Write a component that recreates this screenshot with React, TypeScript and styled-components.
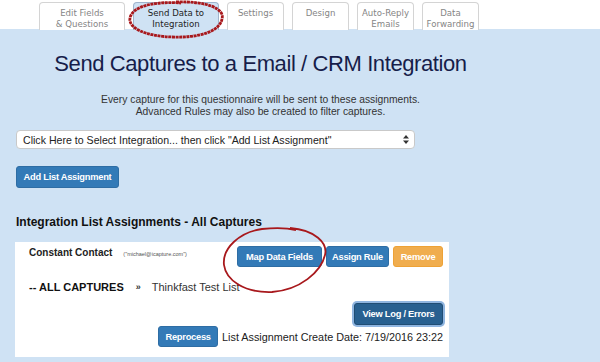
import styled, { createGlobalStyle } from "styled-components";

const GlobalStyle = createGlobalStyle`
  html, body {
    margin: 0;
    padding: 0;
    background: #cfe2f4;
    font-family: "Liberation Sans", Arial, sans-serif;
  }
  body {
    width: 600px;
    height: 362px;
    overflow: hidden;
  }
`;

const Page = styled.div`
  position: relative;
  width: 600px;
  height: 362px;
`;

const TabBar = styled.div`
  display: flex;
  gap: 8px;
  height: 29px;
  padding: 2px 0 0 39px;
  box-sizing: border-box;
  background: #fff;
`;

const Tab = styled.div<{ $w: number; $active?: boolean }>`
  width: ${(p) => p.$w}px;
  height: 28px;
  box-sizing: border-box;
  border: 1px solid ${(p) => (p.$active ? "#9fb4cc" : "#d4d4d4")};
  border-bottom: none;
  border-radius: 4px 4px 0 0;
  background: ${(p) => (p.$active ? "#cfe2f4" : "#fff")};
  color: ${(p) => (p.$active ? "#222" : "#858585")};
  font-family: "DejaVu Sans", Verdana, sans-serif;
  font-size: 8.6px;
  line-height: 11px;
  text-align: center;
  padding-top: 5px;
  white-space: nowrap;
`;

const Main = styled.div`
  padding: 21px 0 0 15px;
`;

const Intro = styled.div`
  width: 491px;
  text-align: center;
`;

const Heading = styled.h1`
  margin: 0;
  font-size: 22px;
  line-height: 28px;
  letter-spacing: -0.4px;
  font-weight: 400;
  color: #161d4a;
`;

const Lead = styled.p`
  margin: 16px 0 0;
  font-size: 10.3px;
  line-height: 12px;
  color: #333;
`;

const SelectBox = styled.div`
  margin: 12px 0 0 1px;
  width: 399px;
  height: 19px;
  box-sizing: border-box;
  display: flex;
  align-items: center;
  justify-content: space-between;
  padding: 0 5px 0 6px;
  background: #fff;
  border: 1px solid #c9c9c9;
  border-radius: 4px;
  font-size: 10.6px;
  color: #222;
`;

const Button = styled.button<{ $tone?: "primary" | "active" | "warning"; $w?: number }>`
  font-family: "Liberation Sans", Arial, sans-serif;
  font-size: 9.3px;
  font-weight: 700;
  letter-spacing: -0.25px;
  color: #fff;
  height: 21px;
  ${(p) => (p.$w ? `width: ${p.$w}px;` : "")}
  padding: 0 4px;
  border-radius: 3px;
  cursor: pointer;
  white-space: nowrap;
  background: ${(p) =>
    p.$tone === "warning" ? "#f0ad4e" : p.$tone === "active" ? "#286090" : "#337ab7"};
  border: 1px solid
    ${(p) => (p.$tone === "warning" ? "#eea236" : p.$tone === "active" ? "#204d74" : "#2e6da4")};
  box-shadow: ${(p) => (p.$tone === "active" ? "0 0 0 2px #8fb5e0" : "none")};
`;

const AddButton = styled(Button)`
  margin: 17px 0 0 1px;
  height: 22px;
`;

const LogButton = styled(Button)`
  height: 22px;
`;

const SectionTitle = styled.h3`
  margin: 27px 0 0 1px;
  font-size: 12px;
  line-height: 14px;
  font-weight: 700;
  color: #111;
`;

const Card = styled.div`
  margin-top: 13px;
  width: 434px;
  height: 115px;
  box-sizing: border-box;
  background: #fff;
  padding: 4px 6px 0 14px;
`;

const TopRow = styled.div`
  display: flex;
  align-items: flex-start;
`;

const Provider = styled.div`
  margin-top: 1px;
  font-size: 10px;
  font-weight: 700;
  color: #222;
  white-space: nowrap;
`;

const Account = styled.span`
  margin-left: 11px;
  font-size: 5.5px;
  font-weight: 400;
  color: #555;
`;

const Actions = styled.div`
  margin-left: auto;
  display: flex;
  gap: 4px;
`;

const ListLine = styled.div`
  margin-top: 14px;
  font-size: 11px;
  color: #333;
  display: flex;
  align-items: center;
`;

const ListTag = styled.span`
  font-weight: 700;
  color: #111;
`;

const Chevron = styled.span`
  margin: 0 11px 0 12px;
  font-size: 9px;
  font-weight: 700;
`;

const RightRow = styled.div<{ $gap: number }>`
  margin-top: ${(p) => p.$gap}px;
  display: flex;
  justify-content: flex-end;
  align-items: center;
  gap: 4px;
`;

const DateText = styled.span`
  font-size: 10.8px;
  color: #222;
  white-space: nowrap;
`;

const Scribble = styled.svg`
  position: absolute;
  pointer-events: none;
  overflow: visible;
`;

function SortArrows() {
  return (
    <svg width="6" height="9" viewBox="0 0 6 9">
      <path d="M3 0 L6 3.5 H0 Z" fill="#333" />
      <path d="M3 9 L6 5.5 H0 Z" fill="#333" />
    </svg>
  );
}

export default function App() {
  return (
    <Page>
      <GlobalStyle />
      <TabBar>
        <Tab $w={86}>Edit Fields<br />&amp; Questions</Tab>
        <Tab $w={86} $active>Send Data to<br />Integration</Tab>
        <Tab $w={57}>Settings</Tab>
        <Tab $w={57}>Design</Tab>
        <Tab $w={57}>Auto-Reply<br />Emails</Tab>
        <Tab $w={57}>Data<br />Forwarding</Tab>
      </TabBar>
      <Main>
        <Intro>
          <Heading>Send Captures to a Email / CRM Integration</Heading>
          <Lead>
            Every capture for this questionnaire will be sent to these assignments.
            <br />
            Advanced Rules may also be created to filter captures.
          </Lead>
        </Intro>
        <SelectBox>
          <span>Click Here to Select Integration... then click "Add List Assignment"</span>
          <SortArrows />
        </SelectBox>
        <AddButton $w={103}>Add List Assignment</AddButton>
        <SectionTitle>Integration List Assignments - All Captures</SectionTitle>
        <Card>
          <TopRow>
            <Provider>
              Constant Contact<Account>("michael@icapture.com")</Account>
            </Provider>
            <Actions>
              <Button $w={85}>Map Data Fields</Button>
              <Button $w={63}>Assign Rule</Button>
              <Button $w={50} $tone="warning">Remove</Button>
            </Actions>
          </TopRow>
          <ListLine>
            <ListTag>-- ALL CAPTURES</ListTag>
            <Chevron>»</Chevron>
            Thinkfast Test List
          </ListLine>
          <RightRow $gap={10}>
            <LogButton $w={89} $tone="active">View Log / Errors</LogButton>
          </RightRow>
          <RightRow $gap={1}>
            <Button $w={60}>Reprocess</Button>
            <DateText>List Assignment Create Date: 7/19/2016 23:22</DateText>
          </RightRow>
        </Card>
      </Main>
      <Scribble style={{ left: 0, top: 0 }} width="600" height="362">
        <path
          d="M176 2 C208 1 225 9 222 19 C220 31 200 38 172 37 C145 36 128 28 130 18 C132 7 152 1 181 3"
          fill="none"
          stroke="#a8181c"
          strokeWidth="2.8"
          strokeDasharray="3 0.6"
        />
        <path
          d="M290 228 C315 230 328 243 325 255 C321 272 300 290 272 292 C244 293 226 280 224 265 C222 248 240 232 262 229 C272 228 283 227 296 230"
          fill="none"
          stroke="#a8181c"
          strokeWidth="1.8"
        />
      </Scribble>
    </Page>
  );
}
